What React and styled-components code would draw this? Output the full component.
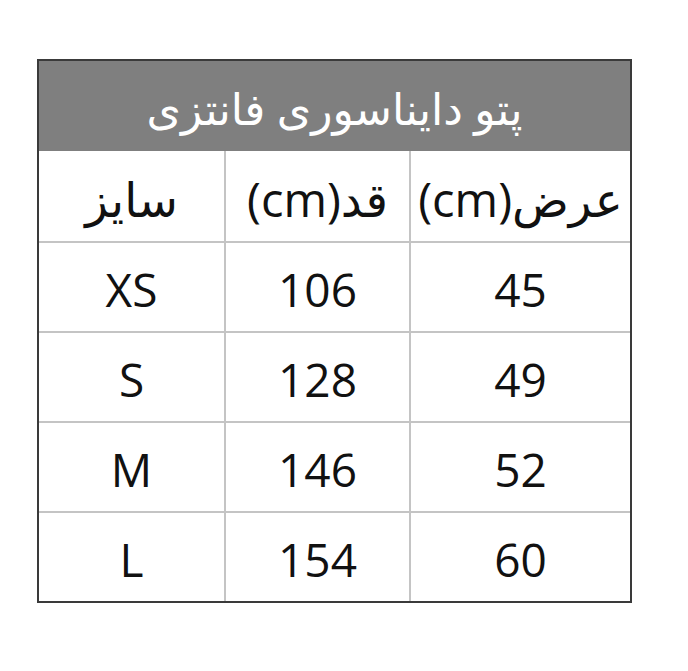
import React from "react";
import styled, { createGlobalStyle } from "styled-components";

const Global = createGlobalStyle`
  html, body { margin: 0; padding: 0; background: #ffffff; }
  body { font-family: "Open Sans", "DejaVu Sans", sans-serif; }
`;

const Page = styled.div`
  width: 688px;
  height: 671px;
  padding: 59px 0 0 37px;
  box-sizing: border-box;
`;

const Table = styled.div`
  width: 595px;
  box-sizing: border-box;
  border: 2px solid #3a3a3a;
  direction: rtl;
  display: flex;
  flex-direction: column;
`;

const Title = styled.div`
  height: 90px;
  background: #7f7f7f;
  color: #ffffff;
  display: flex;
  align-items: center;
  justify-content: center;
  font-size: 44px;
  padding-top: 4px;
  box-sizing: border-box;
`;

const Row = styled.div`
  display: grid;
  grid-template-columns: 221px 185px 185px;
  height: 90px;
  box-sizing: border-box;
  border-top: ${(p) => (p.$first ? "0" : "2px solid #c4c4c4")};
`;

const Cell = styled.div`
  display: flex;
  align-items: center;
  justify-content: center;
  color: #111111;
  font-size: ${(p) => (p.$head ? "47px" : "46px")};
  padding-top: ${(p) => (p.$head ? "6px" : "4px")};
  box-sizing: border-box;
  border-left: ${(p) => (p.$last ? "0" : "2px solid #c4c4c4")};
`;

const header = ["عرض(cm)", "قد(cm)", "سایز"];
const rows = [
  ["45", "106", "XS"],
  ["49", "128", "S"],
  ["52", "146", "M"],
  ["60", "154", "L"],
];

export default function App() {
  return (
    <>
      <Global />
      <Page>
        <Table>
          <Title>پتو دایناسوری فانتزی</Title>
          <Row $first>
            {header.map((h, i) => (
              <Cell key={i} $head $last={i === 2}>
                {h}
              </Cell>
            ))}
          </Row>
          {rows.map((r, ri) => (
            <Row key={ri}>
              {r.map((c, i) => (
                <Cell key={i} $last={i === 2}>
                  {c}
                </Cell>
              ))}
            </Row>
          ))}
        </Table>
      </Page>
    </>
  );
}
